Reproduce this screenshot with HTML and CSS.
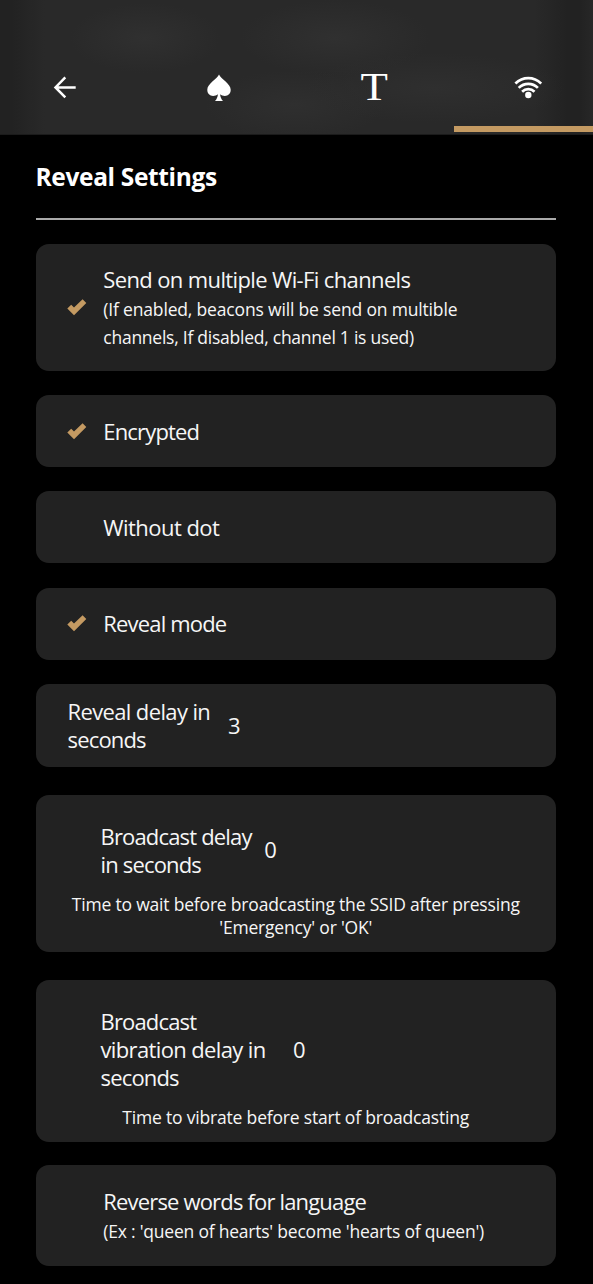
FILE: index.html
```html
<!DOCTYPE html>
<html lang="en">
<head>
<meta charset="utf-8">
<title>Reveal Settings</title>
<link rel="stylesheet" href="styles.css">
</head>
<body>
<svg class="defs" width="0" height="0"><symbol id="check" viewBox="0 0 20 17"><path d="M.3 9.500 4.200 5.800l2.800 2.600L15.600.3 19.300 4 7 16.300z"/></symbol></svg>
<header class="topbar">
  <nav class="tabs">
    <a class="tab"><svg width="24" height="24" viewBox="0 0 24 24" fill="none" stroke="#fff" stroke-width="2.500"><path d="M22.700 12.500H3M12.300 2.300 2.500 12.400l9.800 9.900"/></svg></a>
    <a class="tab"><svg class="spade" width="24" height="28" viewBox="0 0 24 28" fill="#fff"><path d="M12 .5C14 5 23.700 9.500 23.700 15.800c0 4-2.700 6.100-5.800 6.100-1.800 0-3.600-.6-4.800-1.700.2 2.600 1.300 5.100 2.900 6.800H8c1.600-1.700 2.700-4.200 2.900-6.800-1.200 1.100-3 1.700-4.800 1.700C3 21.900.3 19.800.3 15.800.3 9.500 10 5 12 .5z"/></svg></a>
    <a class="tab"><span class="letter">T</span></a>
    <a class="tab"><svg width="28" height="24" viewBox="0 0 28 24" fill="none" stroke="#fff" stroke-width="2.700"><path d="M1.400 8.500C8.800 1.200 19.800 1.200 27.200 8.500M4.700 12.900c5.500-5.400 13.700-5.400 19.200 0M8.100 16.700c3.500-3.500 8.900-3.500 12.400 0"/><circle cx="14.300" cy="20" r="3.200" fill="#fff" stroke="none"/></svg></a>
  </nav>
  <div class="indicator"></div>
</header>
<main class="content">
  <h1 class="title">Reveal Settings</h1>
  <section class="card option tall">
    <svg class="check"><use href="#check"/></svg>
    <div class="label"><div>Send on multiple Wi-Fi channels</div><div><small>(If enabled, beacons will be send on multible</small></div><div><small class="snug">channels, If disabled, channel 1 is used)</small></div></div>
  </section>
  <section class="card option"><svg class="check"><use href="#check"/></svg><div class="label tight">Encrypted</div></section>
  <section class="card option"><span class="check"></span><div class="label loose">Without dot</div></section>
  <section class="card option"><svg class="check"><use href="#check"/></svg><div class="label tight">Reveal mode</div></section>
  <section class="card delay reveal">
    <div class="field"><div class="label">Reveal delay in<br><span class="tight">seconds</span></div><div class="value">3</div></div>
  </section>
  <section class="card delay broadcast">
    <div class="field"><div class="label tight">Broadcast delay<br>in seconds</div><div class="value">0</div></div>
    <p class="note">Time to wait before broadcasting the SSID after pressing<br>'Emergency' or 'OK'</p>
  </section>
  <section class="card delay vibration">
    <div class="field"><div class="label"><span class="tight">Broadcast</span><br>vibration delay in<br><span class="tight">seconds</span></div><div class="value">0</div></div>
    <p class="note">Time to vibrate before start of broadcasting</p>
  </section>
  <section class="card option reverse">
    <span class="check"></span>
    <div class="label"><div class="tight">Reverse words for language</div><div><small class="snug">(Ex : 'queen of hearts' become 'hearts of queen')</small></div></div>
  </section>
</main>
</body>
</html>
```
FILE: styles.css
```css
* { box-sizing: border-box; }
body {
  margin: 0;
  height: 1284px;
  overflow: hidden;
  background: #000;
  color: #f6f6f6;
  font: 22px/28px "Open Sans", "Noto Sans", sans-serif;
  letter-spacing: -0.630px;
  white-space: nowrap;
}
.tight { letter-spacing: -0.830px; }
.loose { letter-spacing: -0.550px; }
.defs { position: absolute; }
.topbar {
  position: relative;
  height: 134.500px;
  border-bottom: 1px solid #1b1b1b;
  background:
    radial-gradient(ellipse 75px 35px at 145px 38px, #303030, transparent),
    radial-gradient(ellipse 95px 38px at 335px 38px, #303030, transparent),
    radial-gradient(ellipse 130px 35px at 435px 88px, #2f2f2f, transparent),
    radial-gradient(ellipse 90px 35px at 295px 105px, #2f2f2f, transparent),
    linear-gradient(90deg, #222 12px, #292929 45px, #292929 535px, #222 567px, #222 580px, #272727);
}
.tabs { display: flex; justify-content: space-between; padding: 57px 34.500px 0; }
.tab { display: flex; width: 60px; height: 60px; align-items: center; justify-content: center; }
.spade { margin-top: 2px; }
.letter { font: 40px/40px "Liberation Serif", serif; letter-spacing: 0; color: #fff; transform: scaleX(1.120); }
.indicator { position: absolute; right: 0; top: 126px; width: 139.500px; height: 6px; background: #c49a62; }
.content { padding: 27.500px 37px 0 35.500px; }
.title {
  margin: 0 0 24px;
  height: 57.800px;
  border-bottom: 2px solid #aaa;
  color: #fff;
  font-size: 24.500px;
  letter-spacing: -0.350px;
  line-height: 29px;
  font-weight: 700;
}
.card { height: 72px; margin-bottom: 24.200px; border-radius: 13px; background: #222; }
.option { display: flex; align-items: center; padding-left: 31.500px; }
.option .label { padding-bottom: 0.800px; }
.check { flex: none; width: 20px; height: 17px; margin-right: 16.300px; fill: #c49a62; }
.tall { height: 127.500px; margin-bottom: 24px; }
small { font-size: 17.500px; line-height: 0; letter-spacing: -0.170px; }
.snug { letter-spacing: -0.220px; }
.tall .snug { letter-spacing: -0.250px; }
.field { display: flex; align-items: center; }
.reveal { height: 83.500px; margin-bottom: 28px; padding: 13.200px 32px; }
.reveal .value { margin-left: 17.700px; }
.broadcast { height: 156.500px; margin-bottom: 28px; padding-top: 26.700px; }
.broadcast .field, .vibration .field { padding-left: 65px; }
.broadcast .value { margin-left: 12.700px; padding-bottom: 2px; }
.note { margin: 14.700px 0 0; font-size: 17.500px; line-height: 23px; letter-spacing: -0.190px; text-align: center; }
.vibration { height: 162px; margin-bottom: 23.500px; padding-top: 27.500px; }
.vibration .value { margin-left: 27.500px; }
.reverse { height: 100.500px; }
```
